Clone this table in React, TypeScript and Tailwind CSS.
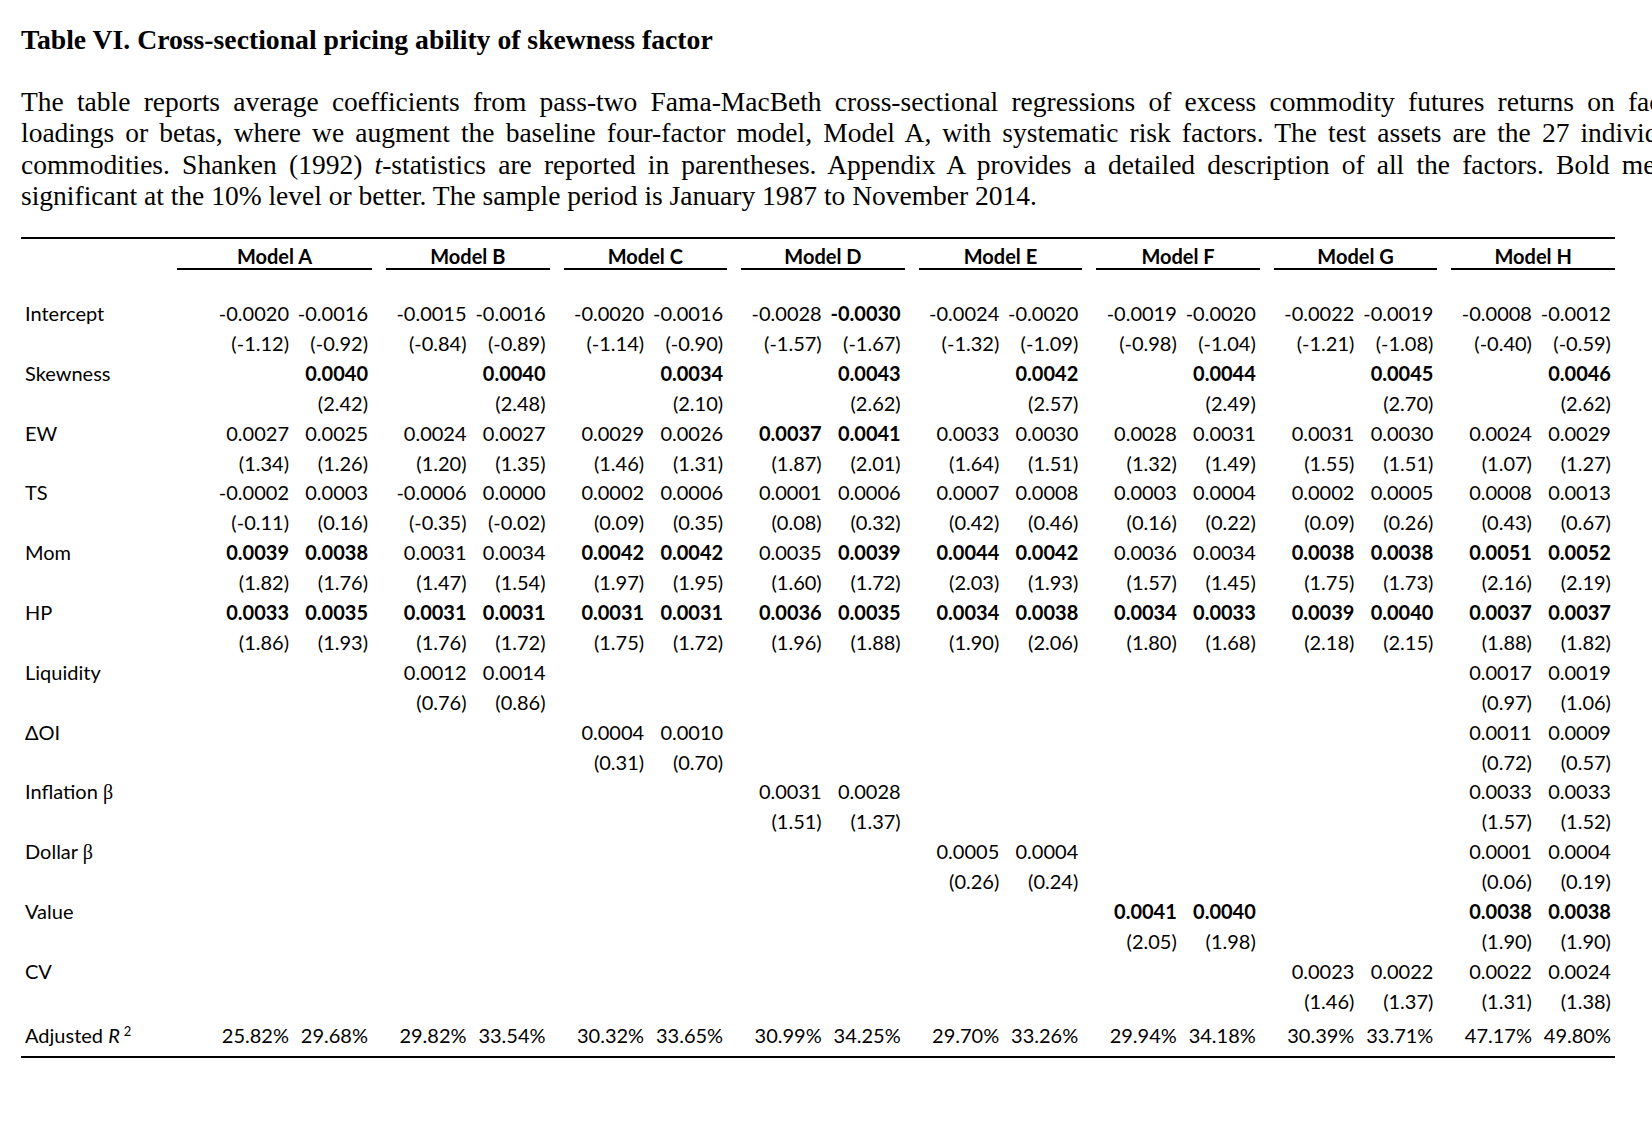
import React from "react";

const SANS = "font-['Lato','Open_Sans',sans-serif]";

type Row = { label: React.ReactNode; coef: string; t: string };

const rows: Row[] = [
  {
    label: "Intercept",
    coef: "-0.0020 -0.0016 -0.0015 -0.0016 -0.0020 -0.0016 -0.0028 *-0.0030 -0.0024 -0.0020 -0.0019 -0.0020 -0.0022 -0.0019 -0.0008 -0.0012",
    t: "(-1.12) (-0.92) (-0.84) (-0.89) (-1.14) (-0.90) (-1.57) (-1.67) (-1.32) (-1.09) (-0.98) (-1.04) (-1.21) (-1.08) (-0.40) (-0.59)",
  },
  {
    label: "Skewness",
    coef: "_ *0.0040 _ *0.0040 _ *0.0034 _ *0.0043 _ *0.0042 _ *0.0044 _ *0.0045 _ *0.0046",
    t: "_ (2.42) _ (2.48) _ (2.10) _ (2.62) _ (2.57) _ (2.49) _ (2.70) _ (2.62)",
  },
  {
    label: "EW",
    coef: "0.0027 0.0025 0.0024 0.0027 0.0029 0.0026 *0.0037 *0.0041 0.0033 0.0030 0.0028 0.0031 0.0031 0.0030 0.0024 0.0029",
    t: "(1.34) (1.26) (1.20) (1.35) (1.46) (1.31) (1.87) (2.01) (1.64) (1.51) (1.32) (1.49) (1.55) (1.51) (1.07) (1.27)",
  },
  {
    label: "TS",
    coef: "-0.0002 0.0003 -0.0006 0.0000 0.0002 0.0006 0.0001 0.0006 0.0007 0.0008 0.0003 0.0004 0.0002 0.0005 0.0008 0.0013",
    t: "(-0.11) (0.16) (-0.35) (-0.02) (0.09) (0.35) (0.08) (0.32) (0.42) (0.46) (0.16) (0.22) (0.09) (0.26) (0.43) (0.67)",
  },
  {
    label: "Mom",
    coef: "*0.0039 *0.0038 0.0031 0.0034 *0.0042 *0.0042 0.0035 *0.0039 *0.0044 *0.0042 0.0036 0.0034 *0.0038 *0.0038 *0.0051 *0.0052",
    t: "(1.82) (1.76) (1.47) (1.54) (1.97) (1.95) (1.60) (1.72) (2.03) (1.93) (1.57) (1.45) (1.75) (1.73) (2.16) (2.19)",
  },
  {
    label: "HP",
    coef: "*0.0033 *0.0035 *0.0031 *0.0031 *0.0031 *0.0031 *0.0036 *0.0035 *0.0034 *0.0038 *0.0034 *0.0033 *0.0039 *0.0040 *0.0037 *0.0037",
    t: "(1.86) (1.93) (1.76) (1.72) (1.75) (1.72) (1.96) (1.88) (1.90) (2.06) (1.80) (1.68) (2.18) (2.15) (1.88) (1.82)",
  },
  {
    label: "Liquidity",
    coef: "_ _ 0.0012 0.0014 _ _ _ _ _ _ _ _ _ _ 0.0017 0.0019",
    t: "_ _ (0.76) (0.86) _ _ _ _ _ _ _ _ _ _ (0.97) (1.06)",
  },
  {
    label: "ΔOI",
    coef: "_ _ _ _ 0.0004 0.0010 _ _ _ _ _ _ _ _ 0.0011 0.0009",
    t: "_ _ _ _ (0.31) (0.70) _ _ _ _ _ _ _ _ (0.72) (0.57)",
  },
  {
    label: (
      <>
        Inflation <span className="font-['Liberation_Serif',serif]">β</span>
      </>
    ),
    coef: "_ _ _ _ _ _ 0.0031 0.0028 _ _ _ _ _ _ 0.0033 0.0033",
    t: "_ _ _ _ _ _ (1.51) (1.37) _ _ _ _ _ _ (1.57) (1.52)",
  },
  {
    label: (
      <>
        Dollar <span className="font-['Liberation_Serif',serif]">β</span>
      </>
    ),
    coef: "_ _ _ _ _ _ _ _ 0.0005 0.0004 _ _ _ _ 0.0001 0.0004",
    t: "_ _ _ _ _ _ _ _ (0.26) (0.24) _ _ _ _ (0.06) (0.19)",
  },
  {
    label: "Value",
    coef: "_ _ _ _ _ _ _ _ _ _ *0.0041 *0.0040 _ _ *0.0038 *0.0038",
    t: "_ _ _ _ _ _ _ _ _ _ (2.05) (1.98) _ _ (1.90) (1.90)",
  },
  {
    label: "CV",
    coef: "_ _ _ _ _ _ _ _ _ _ _ _ 0.0023 0.0022 0.0022 0.0024",
    t: "_ _ _ _ _ _ _ _ _ _ _ _ (1.46) (1.37) (1.31) (1.38)",
  },
];

const r2 = "25.82% 29.68% 29.82% 33.54% 30.32% 33.65% 30.99% 34.25% 29.70% 33.26% 29.94% 34.18% 30.39% 33.71% 47.17% 49.80%";

const models = ["A", "B", "C", "D", "E", "F", "G", "H"];

function Cells({ values }: { values: string }) {
  const v = values.split(" ");
  return (
    <>
      {models.map((m, g) => (
        <div key={m} className="flex justify-end pr-[4px]">
          {[v[g * 2], v[g * 2 + 1]].map((s, i) => {
            const bold = s.startsWith("*");
            const text = s === "_" ? "" : bold ? s.slice(1) : s;
            return (
              <span key={i} className={`w-[79px] text-right whitespace-nowrap ${bold ? "font-bold" : ""}`}>
                {text}
              </span>
            );
          })}
        </div>
      ))}
    </>
  );
}

const GRID = "grid grid-cols-[156px_195px_repeat(7,177.57px)]";

function Line({ children, last }: { children: React.ReactNode; last?: boolean }) {
  return (
    <div className={`w-[1671px] ${last ? "text-left" : "text-justify [text-align-last:justify]"}`}>{children}</div>
  );
}

export default function App() {
  return (
    <div className="w-[1652px] h-[1148px] overflow-hidden bg-white text-black pl-[21px] pt-[24px]">
      <h1 className="font-['Liberation_Serif','Times_New_Roman',serif] font-bold text-[27.7px] leading-[31.6px] whitespace-nowrap">
        Table VI. Cross-sectional pricing ability of skewness factor
      </h1>
      <div className="mt-[30px] font-['Liberation_Serif','Times_New_Roman',serif] text-[27.5px] leading-[31.6px]">
        <Line>
          The table reports average coefficients from pass-two Fama-MacBeth cross-sectional regressions of excess commodity futures returns on factor
        </Line>
        <Line>
          loadings or betas, where we augment the baseline four-factor model, Model A, with systematic risk factors. The test assets are the 27 individual
        </Line>
        <Line>
          commodities. Shanken (1992) <i>t</i>-statistics are reported in parentheses. Appendix A provides a detailed description of all the factors. Bold means
        </Line>
        <Line last>
          significant at the 10% level or better. The sample period is January 1987 to November 2014.
        </Line>
      </div>

      <div className={`mt-[25px] w-[1594px] ${SANS} text-[20px]`}>
        <div className="h-[2px] bg-black" />
        <div className={GRID}>
          <div />
          {models.map((m, g) => (
            <div key={m} className={g === 0 ? "" : "ml-[14px]"}>
              <div className="mt-[5px] h-[24px] leading-[24px] text-center font-bold border-b-2 border-black box-content">
                Model {m}
              </div>
            </div>
          ))}
        </div>
        <div className="mt-[29px]">
          {rows.map((r, i) => (
            <React.Fragment key={i}>
              <div className={`${GRID} h-[29.91px] leading-[29.91px]`}>
                <div className="pl-[4px] whitespace-nowrap">{r.label}</div>
                <Cells values={r.coef} />
              </div>
              <div className={`${GRID} h-[29.91px] leading-[29.91px]`}>
                <div />
                <Cells values={r.t} />
              </div>
            </React.Fragment>
          ))}
          <div className={`${GRID} mt-[3px] h-[30px] leading-[30px]`}>
            <div className="pl-[4px] whitespace-nowrap">
              Adjusted <i>R</i>
              <sup className="ml-[4px] text-[13px]">2</sup>
            </div>
            <Cells values={r2} />
          </div>
        </div>
        <div className="mt-[6px] h-[2px] bg-black" />
      </div>
    </div>
  );
}
